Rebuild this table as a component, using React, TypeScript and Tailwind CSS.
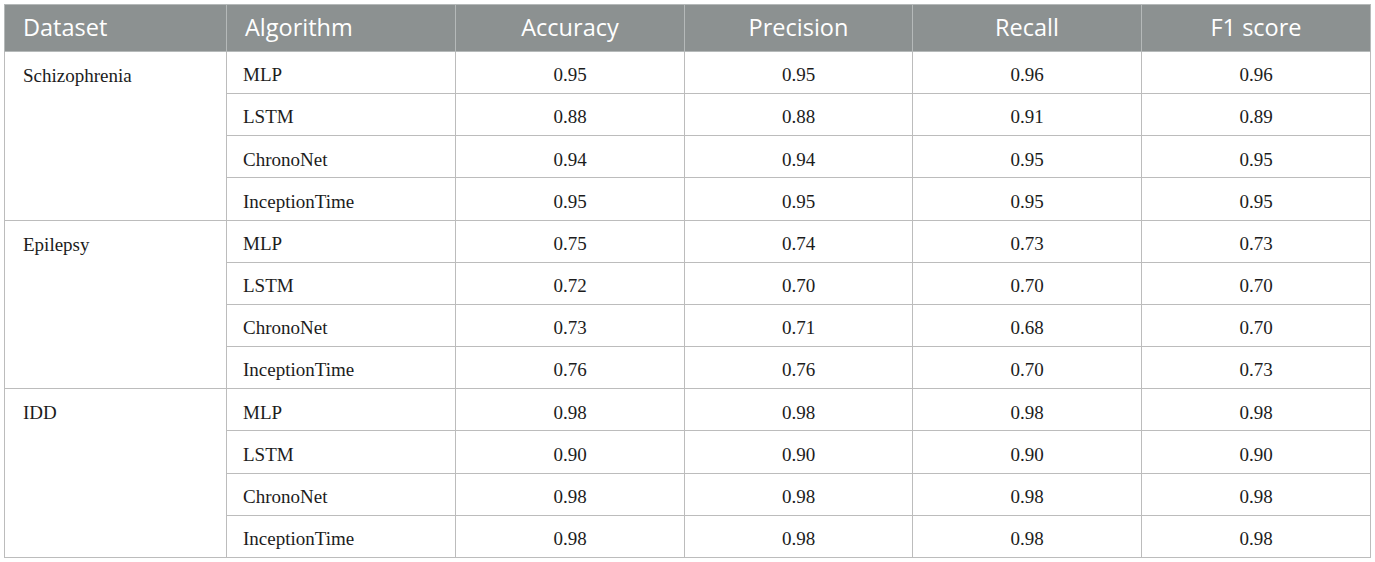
const columns = ["Dataset", "Algorithm", "Accuracy", "Precision", "Recall", "F1 score"];

type Row = { algo: string; values: string[] };
type Group = { dataset: string; rows: Row[] };

const groups: Group[] = [
  {
    dataset: "Schizophrenia",
    rows: [
      { algo: "MLP", values: ["0.95", "0.95", "0.96", "0.96"] },
      { algo: "LSTM", values: ["0.88", "0.88", "0.91", "0.89"] },
      { algo: "ChronoNet", values: ["0.94", "0.94", "0.95", "0.95"] },
      { algo: "InceptionTime", values: ["0.95", "0.95", "0.95", "0.95"] },
    ],
  },
  {
    dataset: "Epilepsy",
    rows: [
      { algo: "MLP", values: ["0.75", "0.74", "0.73", "0.73"] },
      { algo: "LSTM", values: ["0.72", "0.70", "0.70", "0.70"] },
      { algo: "ChronoNet", values: ["0.73", "0.71", "0.68", "0.70"] },
      { algo: "InceptionTime", values: ["0.76", "0.76", "0.70", "0.73"] },
    ],
  },
  {
    dataset: "IDD",
    rows: [
      { algo: "MLP", values: ["0.98", "0.98", "0.98", "0.98"] },
      { algo: "LSTM", values: ["0.90", "0.90", "0.90", "0.90"] },
      { algo: "ChronoNet", values: ["0.98", "0.98", "0.98", "0.98"] },
      { algo: "InceptionTime", values: ["0.98", "0.98", "0.98", "0.98"] },
    ],
  },
];

export default function App() {
  return (
    <div className="min-h-[562px] bg-white pl-[4px] pt-[4px]">
      <table className="w-[1366px] table-fixed border-collapse border border-[#b9bfb9] font-['Liberation_Serif',serif] text-[19px] text-[#1c1c1c]">
        <colgroup>
          <col className="w-[222px]" />
          <col className="w-[229px]" />
          <col className="w-[229px]" />
          <col className="w-[228px]" />
          <col className="w-[229px]" />
          <col className="w-[229px]" />
        </colgroup>
        <thead>
          <tr className="h-[47px] bg-[#8c9191] font-['Open_Sans',sans-serif] text-[23.5px] text-white">
            {columns.map((c, i) => (
              <th
                key={c}
                className={
                  "border border-[#b5b9b9] px-[18px] font-normal " +
                  (i < 2 ? "text-left" : "text-center")
                }
              >
                {c}
              </th>
            ))}
          </tr>
        </thead>
        <tbody>
          {groups.map((g) =>
            g.rows.map((r, ri) => (
              <tr key={g.dataset + r.algo} className="h-[42.17px]">
                {ri === 0 && (
                  <td
                    rowSpan={4}
                    className="border border-[#bcbcbc] px-[18px] pt-[10px] align-top"
                  >
                    {g.dataset}
                  </td>
                )}
                <td className="border border-[#bcbcbc] px-[16px] pt-[6px] pb-0">{r.algo}</td>
                {r.values.map((v, vi) => (
                  <td key={vi} className="border border-[#bcbcbc] pt-[6px] pb-0 text-center">
                    {v}
                  </td>
                ))}
              </tr>
            ))
          )}
        </tbody>
      </table>
    </div>
  );
}
